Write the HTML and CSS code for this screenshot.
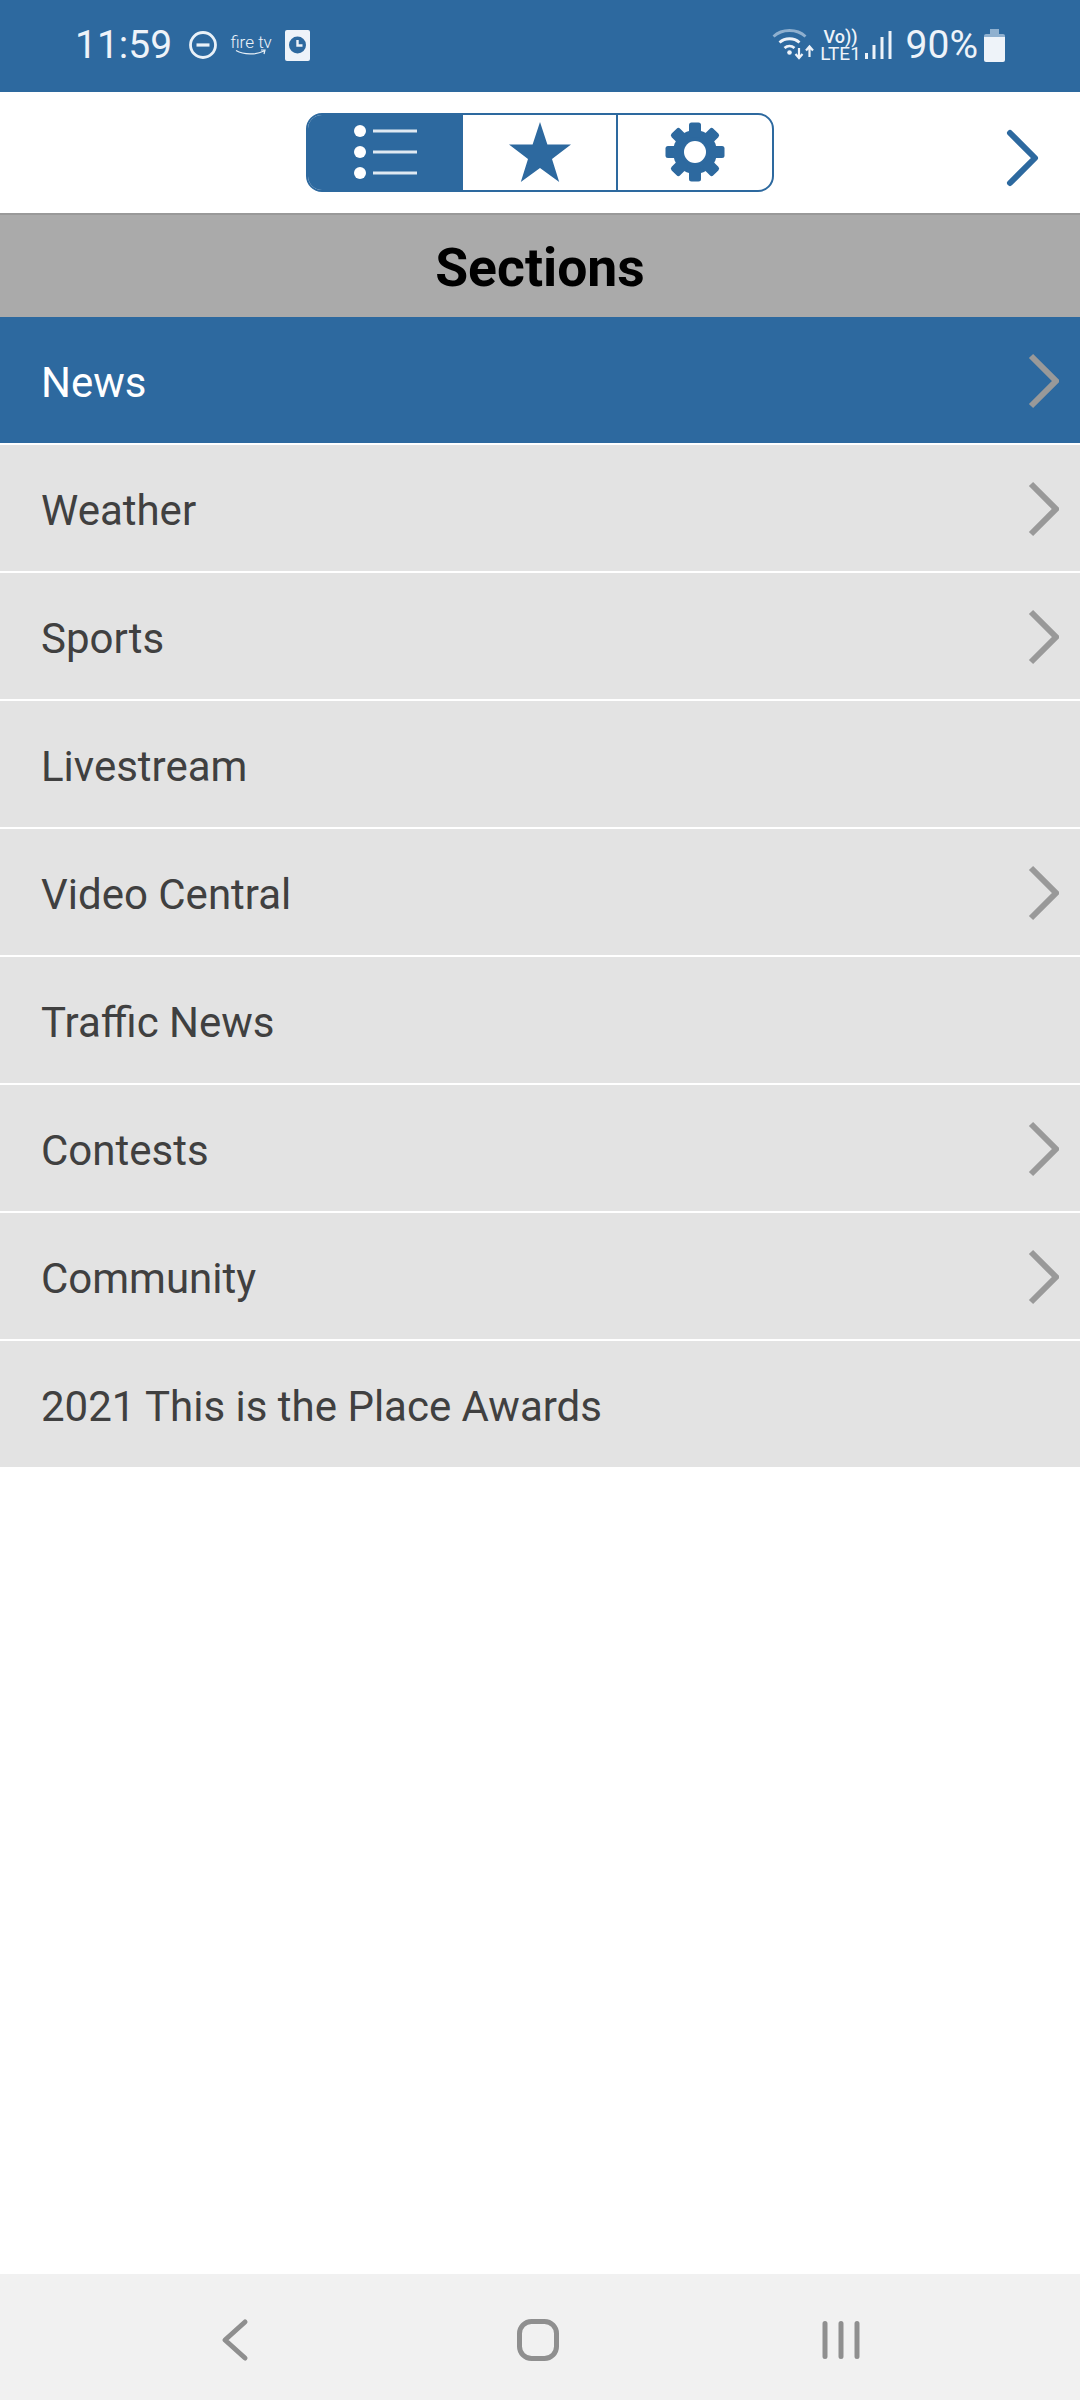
FILE: index.html
```html
<!DOCTYPE html>
<html lang="en">
<head>
<meta charset="utf-8">
<title>Sections</title>
<link rel="stylesheet" href="styles.css">
</head>
<body>
<div class="app">
  <header class="status">
    <div class="status-left">
      <span class="time">11:59</span>
      <svg class="ic-dnd" width="30" height="30" viewBox="0 0 30 30"><circle cx="15" cy="15" r="12.5" fill="none" stroke="#e9f1f8" stroke-width="2.8"/><path d="M8.500 15h13" stroke="#e9f1f8" stroke-width="3.200"/></svg>
      <span class="firetv"><span class="firetv-text">fire tv</span><svg width="32" height="7" viewBox="0 0 32 7"><path d="M1 1.500C9 6 21 6 29 2M26 1h4l-1 4" fill="none" stroke="#e9f1f8" stroke-width="1.200"/></svg></span>
      <svg class="ic-card" width="25" height="31" viewBox="0 0 25 31"><rect width="25" height="31" rx="2" fill="#eef3f9"/><circle cx="12.500" cy="15" r="8.500" fill="#2d699f"/><path d="M12.500 10v5.500h5" fill="none" stroke="#eef3f9" stroke-width="2.400"/></svg>
    </div>
    <div class="status-right">
      <svg class="ic-wifi" width="46" height="34" viewBox="0 0 46 34"><path d="M1.500 8.500C10 .5 25 .5 33.500 8.500" fill="none" stroke="#8fb0cf" stroke-width="2.800"/><path d="M7.500 14.500C13 9.500 22 9.500 27.500 14.500M12.500 20C15.500 17.500 19.500 17.500 22.500 20" fill="none" stroke="#eef3f9" stroke-width="2.800"/><circle cx="17.500" cy="24.500" r="2.300" fill="#eef3f9"/><path d="M27 20v9M23.500 26l3.500 4 3.500-4M37.500 29v-9M34 22.500l3.500-4 3.500 4" fill="none" stroke="#eef3f9" stroke-width="2.200"/></svg>
      <span class="net"><span class="net-vo">Vo))</span><span class="net-lte">LTE1</span></span>
      <svg class="ic-signal" width="27" height="28" viewBox="0 0 27 28"><rect x="0" y="22" width="3" height="6" fill="#eef3f9"/><rect x="7.500" y="14" width="3" height="14" fill="#eef3f9"/><rect x="15.500" y="6" width="3" height="22" fill="#eef3f9"/><rect x="23.500" y="0" width="3" height="28" fill="#eef3f9"/></svg>
      <span class="pct">90%</span>
      <svg class="ic-batt" width="21" height="33" viewBox="0 0 21 33"><path d="M6 0h9v5H6z" fill="#8fb0cf"/><path d="M2 5h17a2 2 0 0 1 2 2v3H0V7a2 2 0 0 1 2-2z" fill="#8fb0cf"/><path d="M0 8h21v23a2 2 0 0 1-2 2H2a2 2 0 0 1-2-2z" fill="#eef3f9"/></svg>
    </div>
  </header>

  <nav class="toolbar">
    <div class="segments">
      <div class="seg seg-active">
        <svg width="63" height="54" viewBox="0 0 63 54"><circle cx="6" cy="6" r="6" fill="#fff"/><circle cx="6" cy="27" r="6" fill="#fff"/><circle cx="6" cy="48" r="6" fill="#fff"/><path d="M19 6h44M19 27h44M19 48h44" stroke="#dfe9f2" stroke-width="3"/></svg>
      </div>
      <div class="seg">
        <svg width="62" height="60" viewBox="0 0 62 60"><path d="M31 0l7.400 22.500H62L43 37l7.200 23L31 46 11.800 60 19 37 0 22.500h23.600z" fill="#2d699f"/></svg>
      </div>
      <div class="seg seg-last">
        <svg class="gear" width="60" height="60" viewBox="-30 -30 60 60">
          <circle r="22" fill="#2d699f"/>
          <g fill="#2d699f">
            <rect x="-6" y="-29.500" width="12" height="15" rx="2.500"/>
            <rect x="-6" y="-29.500" width="12" height="15" rx="2.500" transform="rotate(45)"/>
            <rect x="-6" y="-29.500" width="12" height="15" rx="2.500" transform="rotate(90)"/>
            <rect x="-6" y="-29.500" width="12" height="15" rx="2.500" transform="rotate(135)"/>
            <rect x="-6" y="-29.500" width="12" height="15" rx="2.500" transform="rotate(180)"/>
            <rect x="-6" y="-29.500" width="12" height="15" rx="2.500" transform="rotate(225)"/>
            <rect x="-6" y="-29.500" width="12" height="15" rx="2.500" transform="rotate(270)"/>
            <rect x="-6" y="-29.500" width="12" height="15" rx="2.500" transform="rotate(315)"/>
          </g>
          <circle r="11" fill="#fff"/>
        </svg>
      </div>
    </div>
    <svg class="toolbar-next" width="34" height="58" viewBox="0 0 34 58"><path d="M4 4l25 25L4 54" fill="none" stroke="#2d699f" stroke-width="6" stroke-linecap="round" stroke-linejoin="round"/></svg>
  </nav>

  <h1 class="title">Sections</h1>

  <ul class="list">
    <li class="row row-active"><span>News</span><svg class="chev" width="32" height="56" viewBox="0 0 32 56"><path d="M4 3l25 25L4 53" fill="none" stroke="#999" stroke-width="6"/></svg></li>
    <li class="row"><span>Weather</span><svg class="chev" width="32" height="56" viewBox="0 0 32 56"><path d="M4 3l25 25L4 53" fill="none" stroke="#999" stroke-width="6"/></svg></li>
    <li class="row"><span>Sports</span><svg class="chev" width="32" height="56" viewBox="0 0 32 56"><path d="M4 3l25 25L4 53" fill="none" stroke="#999" stroke-width="6"/></svg></li>
    <li class="row"><span>Livestream</span></li>
    <li class="row"><span>Video Central</span><svg class="chev" width="32" height="56" viewBox="0 0 32 56"><path d="M4 3l25 25L4 53" fill="none" stroke="#999" stroke-width="6"/></svg></li>
    <li class="row"><span>Traffic News</span></li>
    <li class="row"><span>Contests</span><svg class="chev" width="32" height="56" viewBox="0 0 32 56"><path d="M4 3l25 25L4 53" fill="none" stroke="#999" stroke-width="6"/></svg></li>
    <li class="row"><span>Community</span><svg class="chev" width="32" height="56" viewBox="0 0 32 56"><path d="M4 3l25 25L4 53" fill="none" stroke="#999" stroke-width="6"/></svg></li>
    <li class="row"><span>2021 This is the Place Awards</span></li>
  </ul>

  <footer class="navbar">
    <svg width="28" height="44" viewBox="0 0 28 44"><path d="M24 4L4 22l20 18" fill="none" stroke="#8f8f8f" stroke-width="5" stroke-linecap="round" stroke-linejoin="round"/></svg>
    <svg width="46" height="46" viewBox="0 0 46 46"><rect x="4.500" y="4.500" width="37" height="37" rx="12" fill="none" stroke="#8f8f8f" stroke-width="5"/></svg>
    <svg width="42" height="44" viewBox="0 0 42 44"><path d="M5 5.500v33M21 5.500v33M37 5.500v33" fill="none" stroke="#8f8f8f" stroke-width="5" stroke-linecap="round"/></svg>
  </footer>
</div>
</body>
</html>
```

FILE: styles.css
```css
* { box-sizing: border-box; }
html, body { margin: 0; padding: 0; background: #fff; }
body { font-family: Roboto, "Liberation Sans", sans-serif; }
.app { width: 1080px; height: 2400px; display: flex; flex-direction: column; }

.status { height: 92px; flex: none; background: #2d699f; color: #eef3f9; display: flex; justify-content: space-between; align-items: center; padding: 0 75px 2px 75px; }
.status-left, .status-right { display: flex; align-items: center; }
.time { font-size: 39px; line-height: 46px; }
.ic-dnd { margin-left: 16px; }
.firetv { display: flex; flex-direction: column; align-items: center; margin-left: 14px; width: 38px; }
.firetv-text { font-size: 17px; line-height: 14px; white-space: nowrap; font-weight: 300; }
.firetv svg { display: block; }
.ic-card { margin-left: 15px; }
.ic-wifi { margin-right: 3px; }
.net { display: flex; flex-direction: column; align-items: center; width: 40px; }
.net-vo { font-size: 18px; line-height: 16px; font-weight: 500; }
.net-lte { font-size: 19px; line-height: 17px; }
.ic-signal { margin-left: 4px; }
.pct { font-size: 39px; line-height: 46px; margin-left: 14px; }
.ic-batt { margin-left: 6px; }

.toolbar { height: 121px; flex: none; position: relative; display: flex; align-items: center; justify-content: center; background: #fff; padding-bottom: 1px; }
.segments { width: 468px; height: 79px; display: grid; grid-template-columns: 155px 153px 1fr; border: 2px solid #2d699f; border-radius: 16px; overflow: hidden; }
.seg { display: flex; align-items: center; justify-content: center; }
.seg-last { border-left: 2px solid #2d699f; }
.seg-active { background: #2d699f; }
.seg svg { overflow: visible; }
.toolbar-next { position: absolute; right: 40px; top: 37px; }

.title { margin: 0; height: 104px; flex: none; background: #aaa; border-top: 2px solid #999; padding-top: 4px; color: #000; font-size: 53.5px; font-weight: 700; line-height: 98px; text-align: center; }

.list { list-style: none; margin: 0; padding: 0; display: flex; flex-direction: column; gap: 2px; }
.row { height: 126px; background: #e3e3e3; color: #404040; font-size: 42px; display: flex; align-items: center; justify-content: space-between; padding: 5px 21px 0 41px; }
.row-active { background: #2d699f; color: #fff; }
.chev { margin-top: -3px; }

.navbar { margin-top: auto; height: 126px; flex: none; background: #f1f1f1; display: grid; grid-template-columns: repeat(3, 303px); justify-content: center; justify-items: center; align-items: center; padding: 6px 4px 0 0; }
```
